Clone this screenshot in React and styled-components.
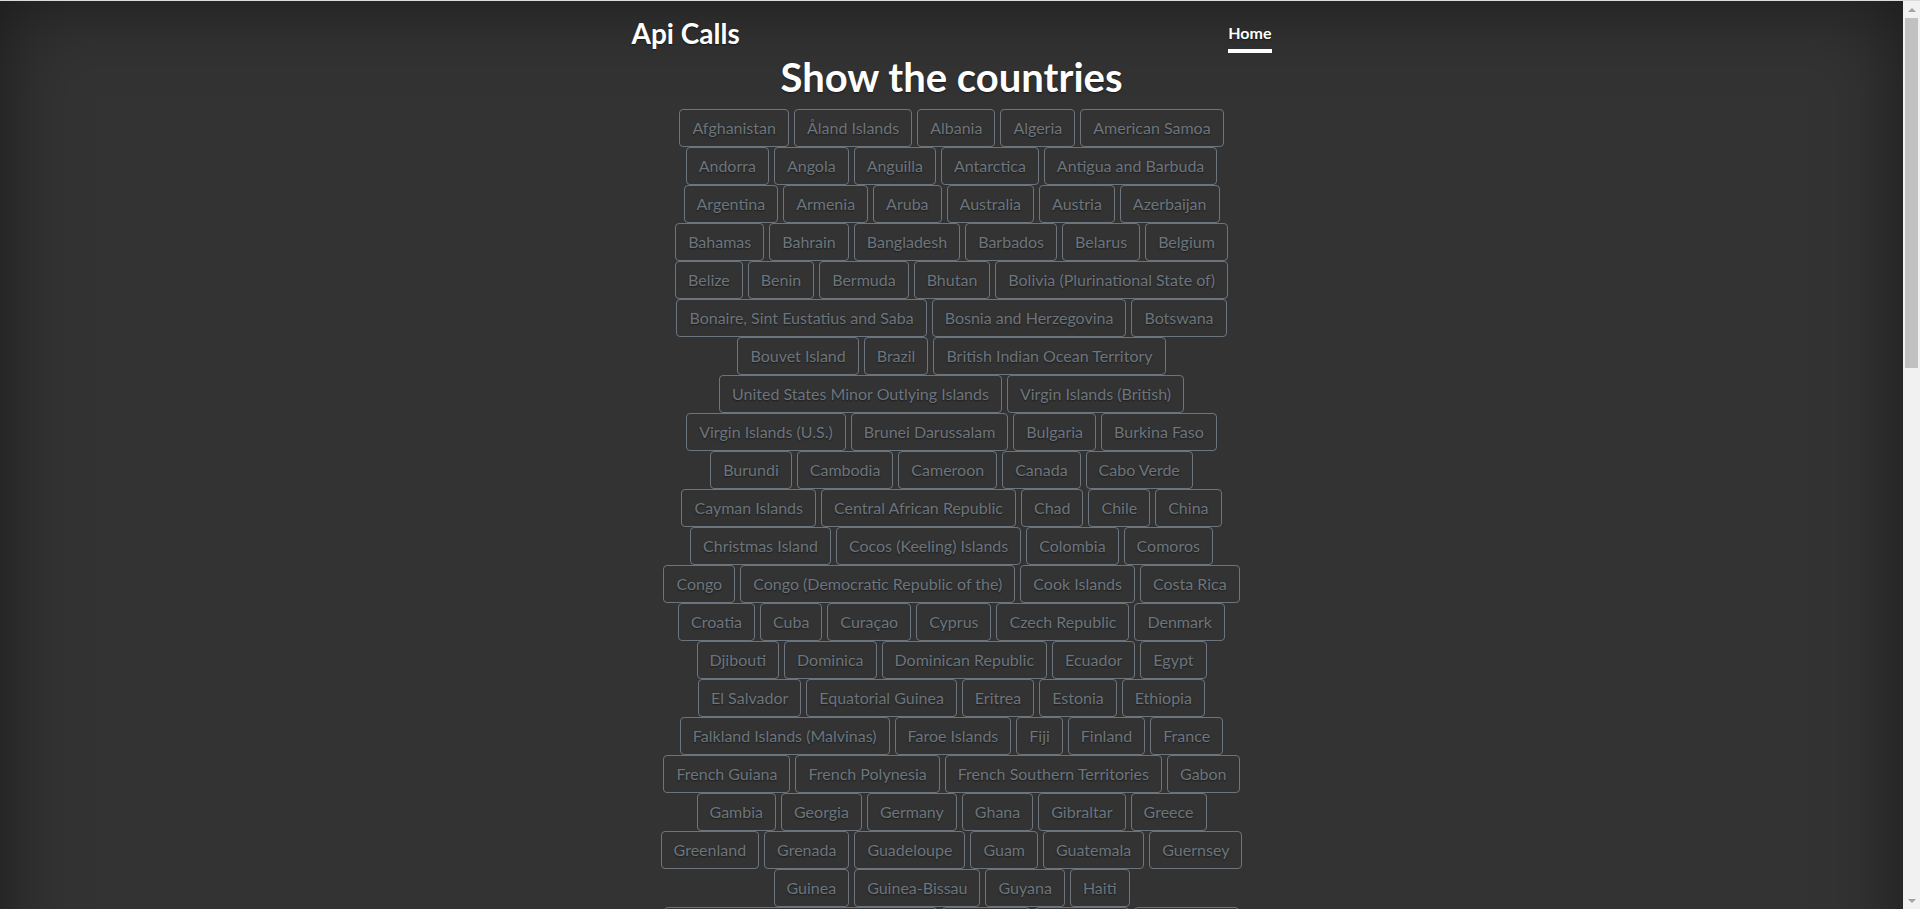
import React from 'react';
import styled, { createGlobalStyle } from 'styled-components';

const countries = [
  'Afghanistan', 'Åland Islands', 'Albania', 'Algeria', 'American Samoa', 'Andorra', 'Angola',
  'Anguilla', 'Antarctica', 'Antigua and Barbuda', 'Argentina', 'Armenia', 'Aruba', 'Australia',
  'Austria', 'Azerbaijan', 'Bahamas', 'Bahrain', 'Bangladesh', 'Barbados', 'Belarus', 'Belgium',
  'Belize', 'Benin', 'Bermuda', 'Bhutan', 'Bolivia (Plurinational State of)',
  'Bonaire, Sint Eustatius and Saba', 'Bosnia and Herzegovina', 'Botswana', 'Bouvet Island',
  'Brazil', 'British Indian Ocean Territory', 'United States Minor Outlying Islands',
  'Virgin Islands (British)', 'Virgin Islands (U.S.)', 'Brunei Darussalam', 'Bulgaria',
  'Burkina Faso', 'Burundi', 'Cambodia', 'Cameroon', 'Canada', 'Cabo Verde', 'Cayman Islands',
  'Central African Republic', 'Chad', 'Chile', 'China', 'Christmas Island',
  'Cocos (Keeling) Islands', 'Colombia', 'Comoros', 'Congo', 'Congo (Democratic Republic of the)',
  'Cook Islands', 'Costa Rica', 'Croatia', 'Cuba', 'Curaçao', 'Cyprus', 'Czech Republic',
  'Denmark', 'Djibouti', 'Dominica', 'Dominican Republic', 'Ecuador', 'Egypt', 'El Salvador',
  'Equatorial Guinea', 'Eritrea', 'Estonia', 'Ethiopia', 'Falkland Islands (Malvinas)',
  'Faroe Islands', 'Fiji', 'Finland', 'France', 'French Guiana', 'French Polynesia',
  'French Southern Territories', 'Gabon', 'Gambia', 'Georgia', 'Germany', 'Ghana', 'Gibraltar',
  'Greece', 'Greenland', 'Grenada', 'Guadeloupe', 'Guam', 'Guatemala', 'Guernsey', 'Guinea',
  'Guinea-Bissau', 'Guyana', 'Haiti', 'Heard Island and McDonald Islands', 'Holy See',
  'Honduras', 'Hong Kong', 'Hungary', 'Iceland', 'India', 'Indonesia', "Côte d'Ivoire",
  'Iran (Islamic Republic of)', 'Iraq', 'Ireland', 'Isle of Man', 'Israel', 'Italy', 'Jamaica',
  'Japan', 'Jersey', 'Jordan', 'Kazakhstan', 'Kenya', 'Kiribati', 'Kuwait', 'Kyrgyzstan',
  "Lao People's Democratic Republic", 'Latvia', 'Lebanon', 'Lesotho', 'Liberia', 'Libya',
  'Liechtenstein', 'Lithuania', 'Luxembourg', 'Macao',
  'Macedonia (the former Yugoslav Republic of)', 'Madagascar', 'Malawi', 'Malaysia', 'Maldives',
  'Mali', 'Malta', 'Marshall Islands', 'Martinique', 'Mauritania', 'Mauritius', 'Mayotte',
  'Mexico', 'Micronesia (Federated States of)', 'Moldova (Republic of)', 'Monaco', 'Mongolia',
  'Montenegro', 'Montserrat', 'Morocco', 'Mozambique', 'Myanmar', 'Namibia', 'Nauru', 'Nepal',
  'Netherlands', 'New Caledonia', 'New Zealand', 'Nicaragua', 'Niger', 'Nigeria', 'Niue',
  'Norfolk Island', "Korea (Democratic People's Republic of)", 'Northern Mariana Islands',
  'Norway', 'Oman', 'Pakistan', 'Palau', 'Palestine, State of', 'Panama', 'Papua New Guinea',
  'Paraguay', 'Peru', 'Philippines', 'Pitcairn', 'Poland', 'Portugal', 'Puerto Rico', 'Qatar',
  'Republic of Kosovo', 'Réunion', 'Romania', 'Russian Federation', 'Rwanda', 'Saint Barthélemy',
  'Saint Helena, Ascension and Tristan da Cunha', 'Saint Kitts and Nevis', 'Saint Lucia',
  'Saint Martin (French part)', 'Saint Pierre and Miquelon', 'Saint Vincent and the Grenadines',
  'Samoa', 'San Marino', 'Sao Tome and Principe', 'Saudi Arabia', 'Senegal', 'Serbia',
  'Seychelles', 'Sierra Leone', 'Singapore', 'Sint Maarten (Dutch part)', 'Slovakia', 'Slovenia',
  'Solomon Islands', 'Somalia', 'South Africa', 'South Georgia and the South Sandwich Islands',
  'Korea (Republic of)', 'South Sudan', 'Spain', 'Sri Lanka', 'Sudan', 'Suriname',
  'Svalbard and Jan Mayen', 'Swaziland', 'Sweden', 'Switzerland', 'Syrian Arab Republic',
  'Taiwan', 'Tajikistan', 'Tanzania, United Republic of', 'Thailand', 'Timor-Leste', 'Togo',
  'Tokelau', 'Tonga', 'Trinidad and Tobago', 'Tunisia', 'Turkey', 'Turkmenistan',
  'Turks and Caicos Islands', 'Tuvalu', 'Uganda', 'Ukraine', 'United Arab Emirates',
  'United Kingdom of Great Britain and Northern Ireland', 'United States of America', 'Uruguay',
  'Uzbekistan', 'Vanuatu', 'Venezuela (Bolivarian Republic of)', 'Viet Nam', 'Wallis and Futuna',
  'Western Sahara', 'Yemen', 'Zambia', 'Zimbabwe',
];

const GlobalStyle = createGlobalStyle`
  html {
    height: 100%;
    border-top: 1px solid #dcdcdc;
    background-color: #333;
  }
  body {
    margin: 0 17px 0 0;
    min-height: 100%;
    display: flex;
    color: #fff;
    background-color: #333;
    font-family: Lato, "Liberation Sans", sans-serif;
    text-align: center;
    text-shadow: 0 0.05rem 0.1rem rgba(0, 0, 0, 0.5);
    box-shadow: inset 0 0 5rem rgba(0, 0, 0, 0.5);
  }
  #root {
    width: 100%;
  }
`;

// the browser's scroll bar, drawn over the right edge of the window
const ScrollBar = styled.div`
  position: fixed;
  top: 1px;
  right: 0;
  bottom: 0;
  width: 17px;
  display: flex;
  flex-direction: column;
  align-items: center;
  background: #f1f1f1;
`;

const ScrollArrow = styled.div`
  flex: 0 0 17px;
  display: flex;
  align-items: center;
  justify-content: center;

  &::before {
    content: '';
    border-left: 4px solid transparent;
    border-right: 4px solid transparent;
    border-${(p) => (p.$down ? 'top' : 'bottom')}: 4px solid #a3a3a3;
  }
`;

const ScrollThumb = styled.div`
  width: 13px;
  height: 350px;
  margin-top: 0;
  background: #c1c1c1;
`;

const ScrollSpacer = styled.div`
  flex: 1;
`;

const CoverContainer = styled.div`
  display: flex;
  flex-direction: column;
  box-sizing: border-box;
  width: 100%;
  max-width: 42em;
  margin: 0 auto;
  padding: 1rem;
`;

const Masthead = styled.header`
  display: flex;
  justify-content: space-between;
  align-items: flex-start;
`;

const Brand = styled.h3`
  margin: 0;
  font-size: 1.75rem;
  font-weight: 700;
  line-height: 1.2;
`;

const NavLink = styled.a`
  display: block;
  padding: 0.25rem 0;
  font-size: 1rem;
  font-weight: 700;
  line-height: 1.5;
  color: ${(p) => (p.$active ? '#fff' : 'rgba(255, 255, 255, 0.5)')};
  text-decoration: none;
  border-bottom: 0.25rem solid ${(p) => (p.$active ? '#fff' : 'transparent')};
`;

const Cover = styled.main`
  padding: 0 1.5rem;
`;

const Title = styled.h1`
  margin: 0 0 0.5rem;
  font-size: 2.5rem;
  font-weight: 700;
  line-height: 1.2;
`;

const CountryList = styled.div`
  display: flex;
  flex-wrap: wrap;
  justify-content: center;
  column-gap: 5px;
`;

const CountryButton = styled.button`
  box-sizing: border-box;
  padding: 0.375rem 0.75rem;
  font-family: inherit;
  font-size: 1rem;
  line-height: 1.5;
  color: #6c757d;
  text-shadow: inherit;
  background: transparent;
  border: 1px solid #6c757d;
  border-radius: 0.25rem;
  cursor: pointer;
  white-space: nowrap;
`;

export default function App() {
  return (
    <>
      <GlobalStyle />
      <CoverContainer>
        <Masthead>
          <Brand>Api Calls</Brand>
          <nav>
            <NavLink href="#" $active>Home</NavLink>
          </nav>
        </Masthead>
        <Cover>
          <Title>Show the countries</Title>
          <CountryList>
            {countries.map((name) => (
              <CountryButton key={name}>{name}</CountryButton>
            ))}
          </CountryList>
        </Cover>
      </CoverContainer>
      <ScrollBar>
        <ScrollArrow />
        <ScrollThumb />
        <ScrollSpacer />
        <ScrollArrow $down />
      </ScrollBar>
    </>
  );
}
